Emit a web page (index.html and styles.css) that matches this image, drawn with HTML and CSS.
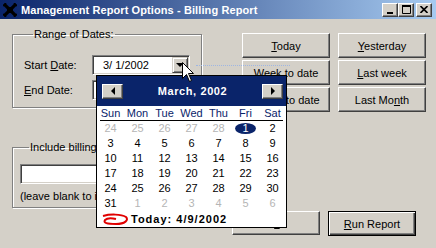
FILE: index.html
```html
<!DOCTYPE html>
<html lang="en">
<head>
<meta charset="UTF-8" />
<title>Management Report Options - Billing Report</title>
<link rel="stylesheet" href="styles.css">
</head>
<body>
  <div class="window">
    <div class="titlebar">
      <svg class="app-icon" viewBox="0 0 14 14" aria-hidden="true">
        <path d="M1 1 L13 13 M13 1 L1 13" stroke="#000" stroke-width="3.2" fill="none"/>
        <rect x="4" y="4" width="6" height="6" fill="#000"/>
        <path d="M0 3 L3 0 M11 0 L14 3 M0 11 L3 14 M11 14 L14 11" stroke="#000" stroke-width="1.5"/>
      </svg>
      <span class="title">Management Report Options - Billing Report</span>
      <div class="caption-buttons">
        <span class="cap-btn"><svg width="8" height="8" viewBox="0 0 8 8"><rect x="1" y="6" width="6" height="2" fill="#000"/></svg></span>
        <span class="cap-btn"><svg width="9" height="9" viewBox="0 0 9 9"><path d="M0.5 1.5 H8.5 V8.5 H0.5 Z" fill="none" stroke="#000"/><rect x="0" y="0" width="9" height="2" fill="#000"/></svg></span>
        <span class="cap-btn close"><svg width="8" height="7" viewBox="0 0 8 7"><path d="M0.5 0 L7.5 7 M7.5 0 L0.5 7" stroke="#000" stroke-width="1.6"/></svg></span>
      </div>
    </div>

    <div class="client">
      <div class="top-row">
        <fieldset class="group dates">
          <legend>Range of Dates:</legend>
          <div class="field-row">
            <label>Start <u>D</u>ate:</label>
            <div class="combo">
              <span class="combo-text">3/ 1/2002</span>
              <span class="drop-btn"><span class="tri-down"></span></span>
            </div>
          </div>
          <div class="field-row">
            <label><u>E</u>nd Date:</label>
            <div class="combo">
              <span class="combo-text">4/ 9/2002</span>
              <span class="drop-btn"><span class="tri-down"></span></span>
            </div>
          </div>
        </fieldset>

        <div class="quick-buttons">
          <button class="btn"><u>T</u>oday</button>
          <button class="btn"><u>Y</u>esterday</button>
          <button class="btn"><u>W</u>eek to date</button>
          <button class="btn"><u>L</u>ast week</button>
          <button class="btn"><u>M</u>onth to date</button>
          <button class="btn">Last Mo<u>n</u>th</button>
        </div>
      </div>

      <fieldset class="group billing">
        <legend>Include billing for client:</legend>
        <div class="textbox"></div>
        <div class="hint">(leave blank to include all clients)</div>
      </fieldset>

      <div class="bottom-row">
        <button class="btn wide">E<u>x</u>it</button>
        <button class="btn default"><u>R</u>un Report</button>
      </div>
    </div>

    <div class="focus-trail"></div>

    <div class="calendar">
      <div class="cal-head">
        <span class="nav-btn"><span class="tri-left"></span></span>
        <span class="cal-title">March, 2002</span>
        <span class="nav-btn"><span class="tri-right"></span></span>
      </div>
      <div class="cal-names">
        <span>Sun</span><span>Mon</span><span>Tue</span><span>Wed</span><span>Thu</span><span>Fri</span><span>Sat</span>
      </div>
      <div class="cal-days">
        <span class="other">24</span><span class="other">25</span><span class="other">26</span><span class="other">27</span><span class="other">28</span><span><b class="selected">1</b></span><span>2</span>
        <span>3</span><span>4</span><span>5</span><span>6</span><span>7</span><span>8</span><span>9</span>
        <span>10</span><span>11</span><span>12</span><span>13</span><span>14</span><span>15</span><span>16</span>
        <span>17</span><span>18</span><span>19</span><span>20</span><span>21</span><span>22</span><span>23</span>
        <span>24</span><span>25</span><span>26</span><span>27</span><span>28</span><span>29</span><span>30</span>
        <span>31</span><span class="other">1</span><span class="other">2</span><span class="other">3</span><span class="other">4</span><span class="other">5</span><span class="other">6</span>
      </div>
      <div class="cal-today">
        <svg class="today-mark" width="28" height="13" viewBox="0 0 28 13" aria-hidden="true">
          <path d="M2 3 C 9 1, 20 1, 25 4 C 28 7, 24 11, 15 11 C 6 11, 2 10, 4 7 C 6 5, 11 5, 15 6" fill="none" stroke="#e00000" stroke-width="2"/>
        </svg>
        <span>Today: 4/9/2002</span>
      </div>
    </div>

    <svg class="cursor" width="13" height="21" viewBox="0 0 13 21" aria-hidden="true">
      <path d="M0.5 0.5 L0.5 16.5 L4.5 12.5 L7.5 19.5 L9.5 18.5 L6.5 11.5 L11.5 11.5 Z" fill="#fff" stroke="#000" stroke-width="1"/>
    </svg>
  </div>
</body>
</html>
```

FILE: styles.css
```css
/* Win2000 style dialog */
*, *::before, *::after {
  box-sizing: border-box;
}
body {
  margin: 0;
  background: #d4d0c8;
  font: 11px "Liberation Sans", Arial, sans-serif;
  color: #000;
}
.window {
  position: relative;
  width: 436px;
  height: 248px;
  overflow: hidden;
}

/* title bar */
.titlebar {
  height: 19px;
  display: flex;
  align-items: center;
  padding: 0 4px 0 3px;
  background: linear-gradient(90deg, #0a246a 0%, #a6caf0 100%);
  color: #fff;
}
.app-icon {
  width: 14px;
  height: 14px;
  margin-right: 4px;
}
.title {
  flex: 1;
  font-weight: bold;
  font-size: 11px;
  letter-spacing: 0.1px;
}
.caption-buttons {
  display: flex;
}
.cap-btn {
  width: 16px;
  height: 14px;
  display: flex;
  align-items: center;
  justify-content: center;
  background: #d4d0c8;
  border: 1px solid;
  border-color: #fff #404040 #404040 #fff;
  box-shadow: inset -1px -1px #808080;
}
.cap-btn.close {
  margin-left: 2px;
}

/* buttons */
.btn {
  font: inherit;
  color: #000;
  padding: 0;
  background: #d4d0c8;
  border: 1px solid;
  border-color: #fff #404040 #404040 #fff;
  box-shadow: inset -1px -1px #808080;
}
.btn.default {
  border: 1px solid #000;
  box-shadow: inset 1px 1px #fff, inset -1px -1px #404040, inset -2px -2px #808080;
}

/* group boxes */
.group {
  margin: 0 0 0 12px;
  padding: 0;
  min-width: 0;
  border: 1px solid #808080;
  box-shadow: inset 1px 1px #fff, 1px 1px #fff;
}
.group legend {
  margin-left: 9px;
  padding: 0 1px;
  line-height: 13px;
}

.top-row {
  display: flex;
  align-items: flex-start;
  height: 122px;
}
.dates {
  margin-top: 9px;
  width: 190px;
  height: 80px;
  padding-left: 11px;
}
.field-row {
  display: flex;
  align-items: center;
  height: 20px;
  margin-top: 5px;
}
.field-row:first-of-type {
  margin-top: 14px;
}
.field-row label {
  width: 68px;
}
.combo {
  width: 98px;
  height: 20px;
  display: flex;
  align-items: center;
  padding-left: 10px;
  background: #fff;
  border: 1px solid;
  border-color: #808080 #fff #fff #808080;
  box-shadow: inset 1px 1px #404040, inset -1px -1px #d4d0c8;
}
.drop-btn {
  margin-left: auto;
  margin-right: 1px;
  width: 16px;
  height: 16px;
  display: flex;
  align-items: center;
  justify-content: center;
  background: #d4d0c8;
  border: 1px solid;
  border-color: #d4d0c8 #404040 #404040 #d4d0c8;
  box-shadow: inset 1px 1px #fff, inset -1px -1px #808080;
}
.tri-down {
  width: 0;
  height: 0;
  border-left: 4px solid transparent;
  border-right: 4px solid transparent;
  border-top: 4px solid #000;
}
.tri-left {
  width: 0;
  height: 0;
  border-top: 4px solid transparent;
  border-bottom: 4px solid transparent;
  border-right: 4px solid #000;
}
.tri-right {
  width: 0;
  height: 0;
  border-top: 4px solid transparent;
  border-bottom: 4px solid transparent;
  border-left: 4px solid #000;
}

.quick-buttons {
  margin: 14px 0 0 40px;
  display: grid;
  grid-template-columns: 88px 88px;
  grid-auto-rows: 25px;
  column-gap: 8px;
  row-gap: 2px;
}

.billing {
  width: 268px;
  height: 67px;
  padding-left: 7px;
}
.textbox {
  margin-top: 10px;
  width: 240px;
  height: 20px;
  background: #fff;
  border: 1px solid;
  border-color: #808080 #fff #fff #808080;
  box-shadow: inset 1px 1px #404040, inset -1px -1px #d4d0c8;
}
.hint {
  margin-top: 6px;
  line-height: 13px;
}

.bottom-row {
  display: flex;
  justify-content: flex-end;
  align-items: flex-start;
  gap: 8px;
  margin-top: 3px;
  padding-right: 20px;
}
.bottom-row .btn {
  width: 88px;
  height: 25px;
}
.bottom-row .wide {
  height: 24px;
}

.focus-trail {
  position: absolute;
  left: 196px;
  top: 65px;
  width: 94px;
  border-top: 1px dotted #9fb6e2;
}

/* month calendar popup */
.calendar {
  position: absolute;
  left: 96px;
  top: 75px;
  width: 191px;
  border: 1px solid #000;
  background: #fff;
}
.cal-head {
  height: 30px;
  display: flex;
  align-items: center;
  justify-content: space-between;
  padding: 0 3px 0 5px;
  background: #0a246a;
}
.nav-btn {
  width: 21px;
  height: 15px;
  display: flex;
  align-items: center;
  justify-content: center;
  background: #d4d0c8;
  border: 1px solid;
  border-color: #fff #404040 #404040 #fff;
  box-shadow: inset -1px -1px #808080;
}
.cal-title {
  color: #fff;
  font-weight: bold;
  letter-spacing: 0.6px;
}
.cal-names {
  display: grid;
  grid-template-columns: repeat(7, 27px);
  height: 15px;
  line-height: 14px;
  text-align: center;
  color: #0a246a;
  background: linear-gradient(#000, #000) no-repeat 3px 100% / 183px 1px;
}
.cal-days {
  display: grid;
  grid-template-columns: repeat(7, 27px);
  grid-auto-rows: 15px;
  line-height: 15px;
  text-align: center;
}
.cal-days .other {
  color: #b5b5b5;
}
.selected {
  display: inline-block;
  width: 21px;
  height: 11px;
  line-height: 11px;
  border-radius: 50%;
  background: #0a246a;
  color: #fff;
  font-weight: normal;
}
.cal-today {
  height: 16px;
  display: flex;
  align-items: center;
  padding-left: 4px;
  font-weight: bold;
  letter-spacing: 1px;
}
.today-mark {
  margin-right: 2px;
}

.cursor {
  position: absolute;
  left: 182px;
  top: 62px;
}
```
